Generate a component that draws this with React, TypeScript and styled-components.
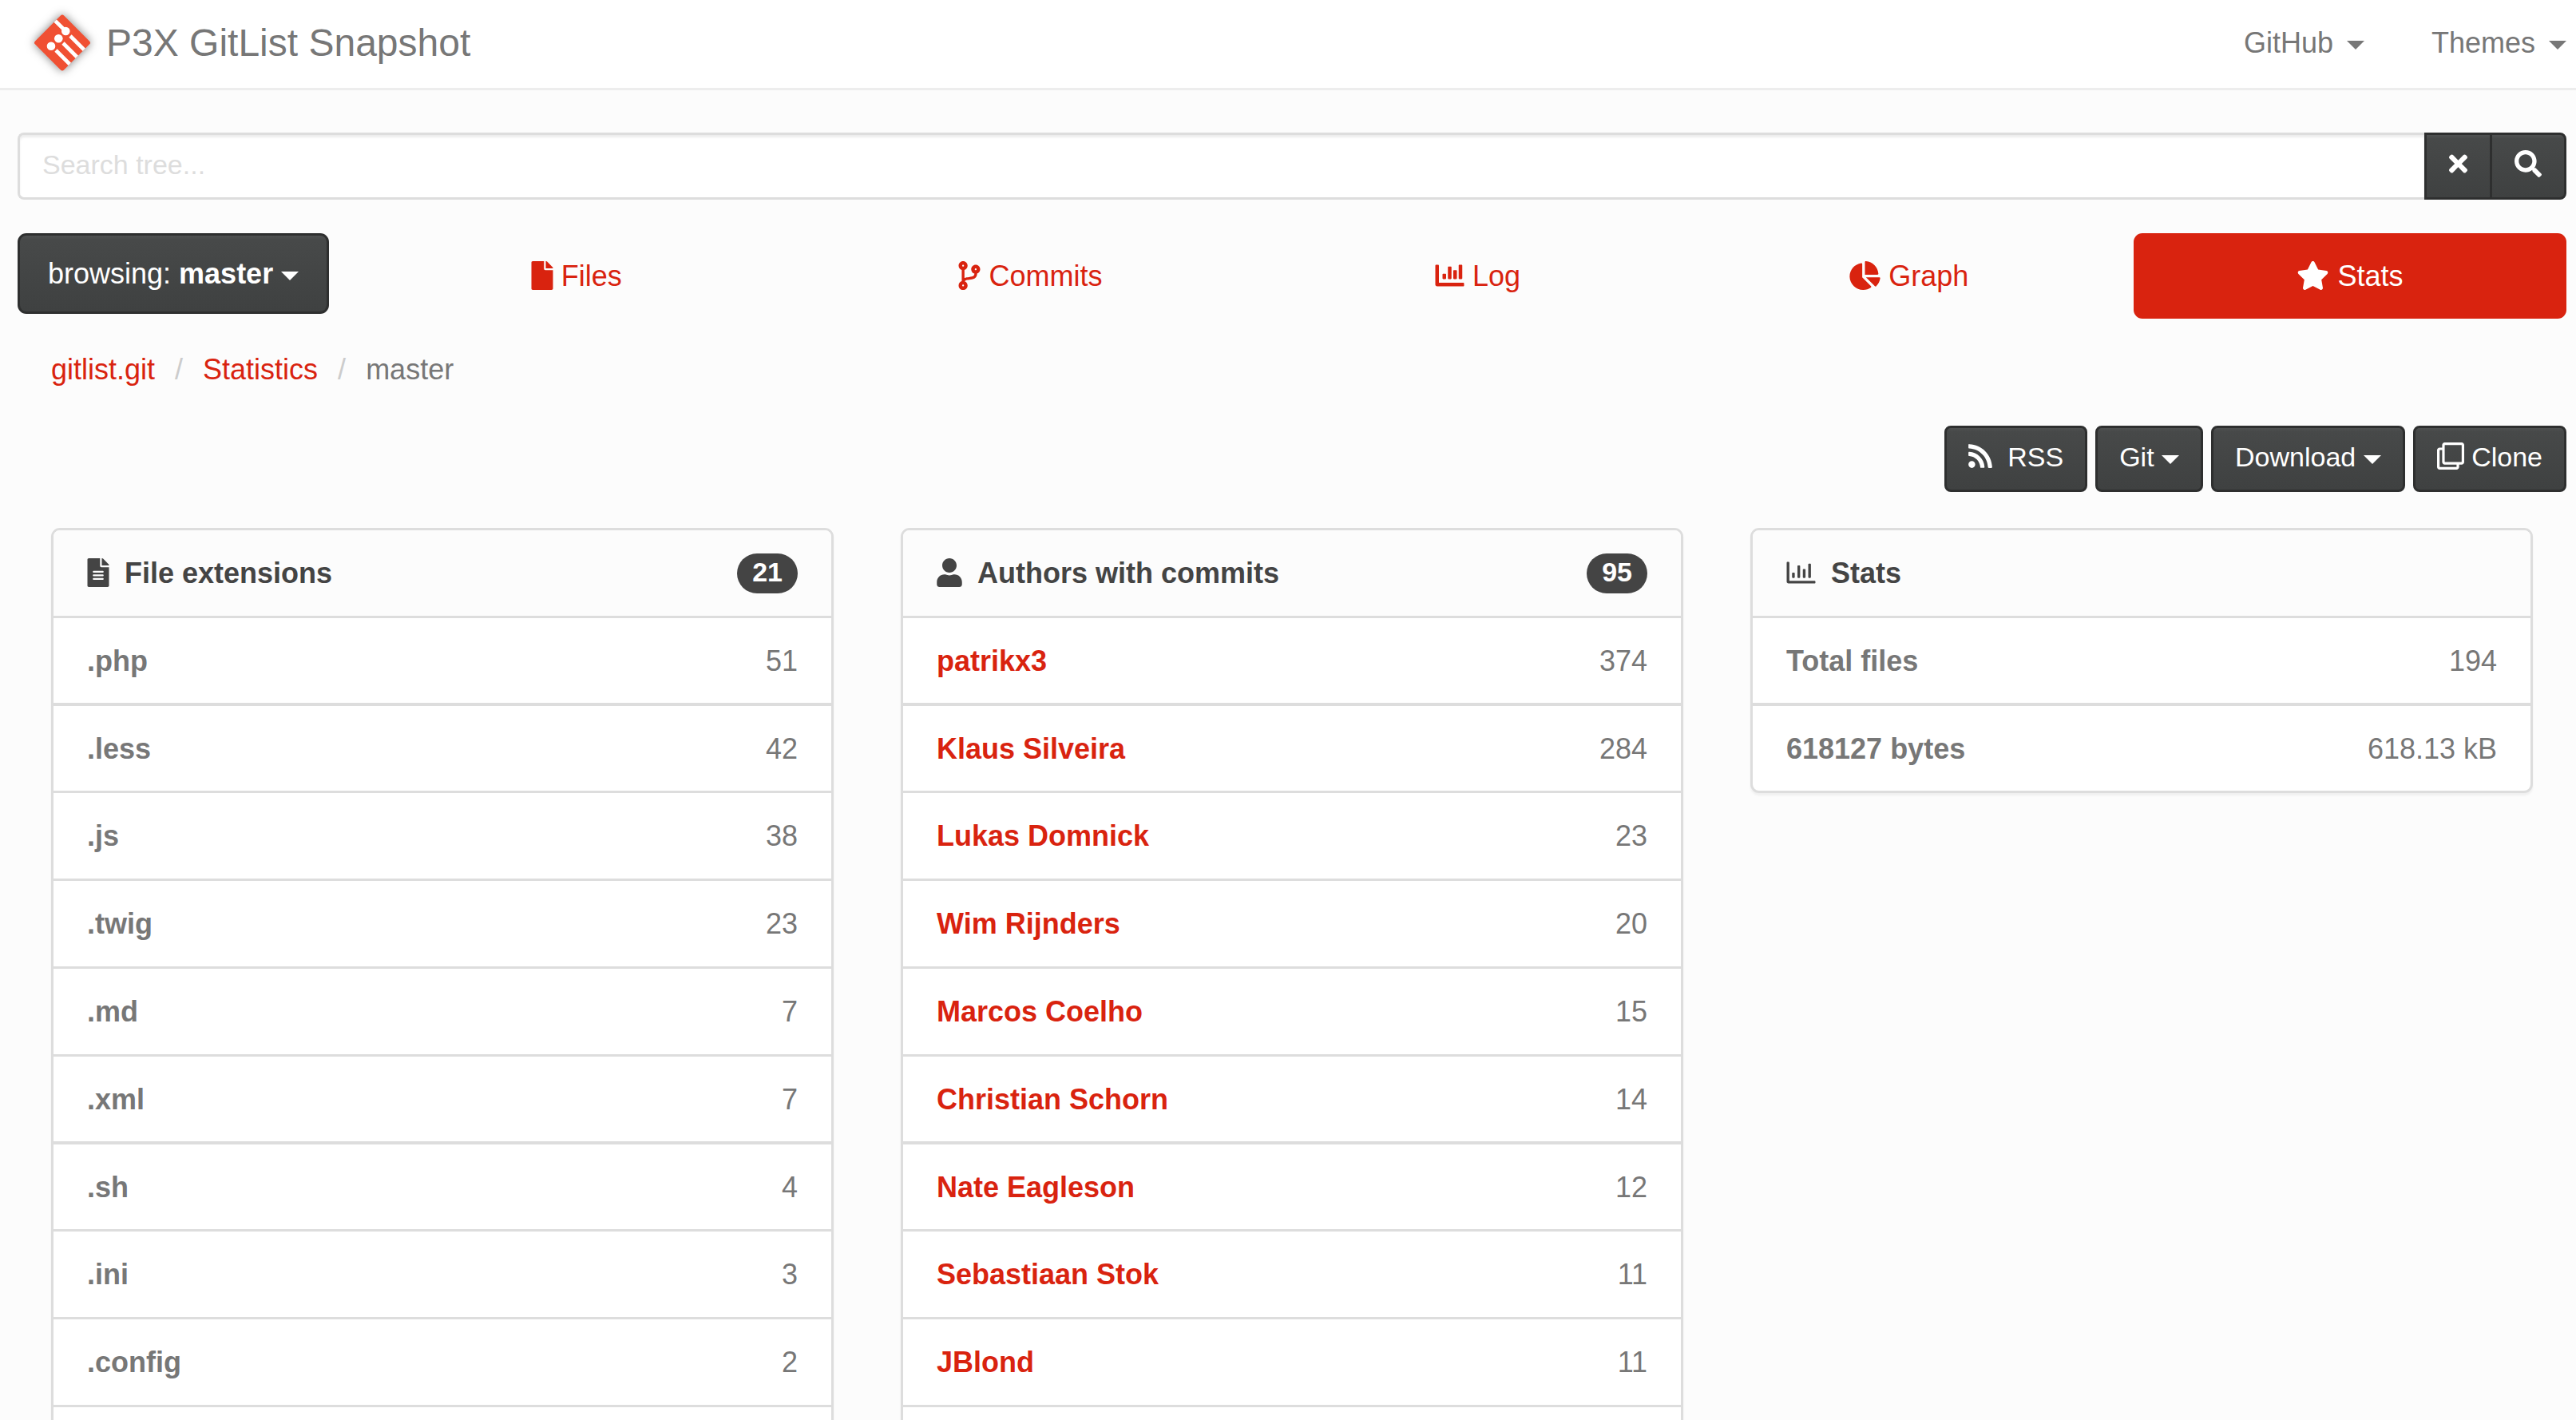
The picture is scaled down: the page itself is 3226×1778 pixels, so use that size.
import React from 'react';
import styled, { createGlobalStyle, css } from 'styled-components';
import {
  FaChartBar,
  FaChartPie,
  FaCodeBranch,
  FaFile,
  FaFileAlt,
  FaRegChartBar,
  FaRegClone,
  FaRss,
  FaSearch,
  FaStar,
  FaTimes,
  FaUser,
} from 'react-icons/fa';

const color = {
  page: '#fcfcfc',
  white: '#ffffff',
  line: '#dddddd',
  navLine: '#ededed',
  text: '#777777',
  heading: '#444444',
  red: '#d9230f',
  placeholder: '#dddddd',
  slash: '#cccccc',
  buttonEdge: '#2e2f2f',
};

const GlobalStyle = createGlobalStyle`
  *, *::before, *::after { box-sizing: border-box; }
  body {
    margin: 0;
    background: ${color.page};
    color: ${color.text};
    font-family: "Liberation Sans", Arial, sans-serif;
    font-size: 36px;
    line-height: 53px;
  }
  a { color: ${color.red}; text-decoration: none; }
  button, input { font-family: inherit; }
`;

const Page = styled.div`
  height: 100vh;
  overflow: hidden;
`;

const Icon = styled.span<{ $width: number }>`
  svg {
    width: ${p => p.$width}px;
    height: 1em;
    vertical-align: -0.125em;
  }
`;

const Caret = styled.span<{ $spaced?: boolean }>`
  display: inline-block;
  vertical-align: middle;
  margin-left: ${p => (p.$spaced ? '7px' : '0')};
  border-top: 11px solid;
  border-left: 11px solid transparent;
  border-right: 11px solid transparent;
`;

/* Top bar */

const Navbar = styled.header`
  display: flex;
  align-items: center;
  justify-content: space-between;
  padding: 27px 12px 30px 43px;
  background: ${color.white};
  border-bottom: 3px solid ${color.navLine};
`;

const Brand = styled.a`
  display: flex;
  align-items: center;
  gap: 20px;
  height: 53px;
  color: ${color.text};
  font-size: 48px;
`;

const LogoSvg = styled.svg`
  width: 70px;
  height: 71px;
  overflow: visible;
  filter: drop-shadow(0 0 6px rgba(0, 0, 0, 0.5));
`;

const NavMenu = styled.nav`
  display: flex;
  gap: 84px;
`;

const NavButton = styled.button`
  padding: 0;
  border: 0;
  background: none;
  color: ${color.text};
  font-size: 36px;
  line-height: 53px;
`;

/* Body */

const Main = styled.main`
  display: flex;
  flex-direction: column;
  padding: 53px 12px 0 22px;
`;

const darkSurface = css`
  border: 3px solid ${color.buttonEdge};
  background: linear-gradient(#4f5151, #474949 6%, #3f4141);
  color: ${color.white};
`;

const SearchForm = styled.form`
  display: flex;
  height: 84px;
`;

const SearchInput = styled.input`
  flex: 1;
  min-width: 0;
  padding: 0 28px 4px;
  border: 3px solid ${color.line};
  border-right: 0;
  border-radius: 8px 0 0 8px;
  background: ${color.white};
  box-shadow: inset 0 3px 3px rgba(0, 0, 0, 0.075);
  color: ${color.text};
  font-size: 34px;
  outline: 0;

  &::placeholder {
    color: ${color.placeholder};
    opacity: 1;
  }
`;

const SearchButton = styled.button`
  ${darkSurface}
  padding: 10px 28px 15px;
  font-size: 34px;
  line-height: 52px;

  & + & {
    margin-left: -3px;
    border-radius: 0 8px 8px 0;
  }
`;

const Toolbar = styled.div`
  display: flex;
  align-items: flex-start;
  gap: 42px;
  margin-top: 42px;
`;

const BranchButton = styled.button`
  ${darkSurface}
  padding: 21px 35px;
  border-radius: 11px;
  font-size: 36px;
  line-height: 53px;
`;

const Tabs = styled.nav`
  flex: 1;
  display: grid;
  grid-template-columns: 535fr 594fr 518fr 554fr 542fr;
  gap: 4px;
`;

const Tab = styled.a<{ $active?: boolean }>`
  padding: 27px 0;
  border-radius: 11px;
  text-align: center;
  ${p => p.$active && css`
    background: ${color.red};
    color: ${color.white};
  `}
`;

const Breadcrumb = styled.ol`
  display: flex;
  margin: 37px 0 0;
  padding: 0 0 0 42px;
  list-style: none;

  li + li::before {
    content: '/';
    padding: 0 25px;
    color: ${color.slash};
  }
`;

const Actions = styled.div`
  display: flex;
  justify-content: flex-end;
  gap: 10px;
  margin-top: 44px;
`;

const ActionButton = styled.button`
  ${darkSurface}
  padding: 10px 27px 15px;
  border-radius: 8px;
  font-size: 34px;
  line-height: 52px;
`;

const Columns = styled.div`
  display: grid;
  grid-template-columns: repeat(3, minmax(0, 1fr));
  align-items: start;
  gap: 84px;
  margin-top: 45px;
  padding: 0 42px;
`;

const Panel = styled.section`
  border: 3px solid ${color.line};
  border-radius: 11px;
  background: ${color.white};
  box-shadow: 0 3px 3px rgba(0, 0, 0, 0.05);
  overflow: hidden;
`;

const PanelHeader = styled.header`
  display: flex;
  align-items: center;
  gap: 19px;
  padding: 27px 42px;
  background: ${color.page};
  color: ${color.heading};
`;

const PanelTitle = styled.h2`
  flex: 1;
  margin: 0;
  font-size: 36px;
  line-height: 53px;
  font-weight: bold;
`;

const Badge = styled.span`
  padding: 6px 19px 10px;
  border-radius: 27px;
  background: ${color.heading};
  color: ${color.white};
  font-size: 34px;
  line-height: 34px;
  font-weight: bold;
`;

const Rows = styled.ul`
  margin: 0;
  padding: 0;
  list-style: none;
`;

const Row = styled.li`
  display: flex;
  justify-content: space-between;
  min-height: 110px;
  padding: 27px 42px;
  border-top: 3px solid ${color.line};

  &:nth-child(5n + 1) {
    min-height: 109px;
    padding-bottom: 26px;
  }

  &:nth-child(5n + 2) {
    padding-bottom: 26px;
    border-top-width: 4px;
  }
`;

const RowName = styled.strong`
  font-weight: bold;
`;

interface Entry {
  name: string;
  value: string;
}

const extensions: Entry[] = [
  { name: '.php', value: '51' },
  { name: '.less', value: '42' },
  { name: '.js', value: '38' },
  { name: '.twig', value: '23' },
  { name: '.md', value: '7' },
  { name: '.xml', value: '7' },
  { name: '.sh', value: '4' },
  { name: '.ini', value: '3' },
  { name: '.config', value: '2' },
];

const authors: Entry[] = [
  { name: 'patrikx3', value: '374' },
  { name: 'Klaus Silveira', value: '284' },
  { name: 'Lukas Domnick', value: '23' },
  { name: 'Wim Rijnders', value: '20' },
  { name: 'Marcos Coelho', value: '15' },
  { name: 'Christian Schorn', value: '14' },
  { name: 'Nate Eagleson', value: '12' },
  { name: 'Sebastiaan Stok', value: '11' },
  { name: 'JBlond', value: '11' },
];

const totals: Entry[] = [
  { name: 'Total files', value: '194' },
  { name: '618127 bytes', value: '618.13 kB' },
];

const tabs = [
  { label: 'Files', icon: <FaFile />, width: 28 },
  { label: 'Commits', icon: <FaCodeBranch />, width: 28 },
  { label: 'Log', icon: <FaChartBar />, width: 37 },
  { label: 'Graph', icon: <FaChartPie />, width: 39 },
  { label: 'Stats', icon: <FaStar />, width: 41, active: true },
];

function Logo() {
  return (
    <LogoSvg viewBox="13 12 70 71" aria-hidden="true">
      <defs>
        <clipPath id="diamond">
          <rect x="22.5" y="22" width="51" height="51" rx="3" transform="rotate(45 48 47.5)" />
        </clipPath>
      </defs>
      <g clipPath="url(#diamond)">
        <rect x="10" y="10" width="76" height="76" fill="#f05033" />
        <g stroke="#fff" strokeWidth="4.6">
          <path d="M36 17 52.3 33M58 39 78 59M49 48 69 68M40 57 60 77" />
        </g>
        <g fill="#fff">
          <circle cx="52.3" cy="33" r="5.3" />
          <circle cx="43.3" cy="42.3" r="5.3" />
          <circle cx="34" cy="51.7" r="5.3" />
        </g>
      </g>
    </LogoSvg>
  );
}

interface StatPanelProps {
  title: string;
  icon: React.ReactNode;
  iconWidth: number;
  entries: Entry[];
  count?: number;
  linked?: boolean;
  continues?: boolean;
}

function StatPanel({ title, icon, iconWidth, entries, count, linked, continues }: StatPanelProps) {
  return (
    <Panel>
      <PanelHeader>
        <Icon $width={iconWidth}>{icon}</Icon>
        <PanelTitle>{title}</PanelTitle>
        {count !== undefined && <Badge>{count}</Badge>}
      </PanelHeader>
      <Rows>
        {entries.map(entry => (
          <Row key={entry.name}>
            <RowName>{linked ? <a href="#author">{entry.name}</a> : entry.name}</RowName>
            <span>{entry.value}</span>
          </Row>
        ))}
        {continues && <Row aria-hidden="true" />}
      </Rows>
    </Panel>
  );
}

export default function App() {
  return (
    <Page>
      <GlobalStyle />
      <Navbar>
        <Brand href="#home">
          <Logo />
          P3X GitList Snapshot
        </Brand>
        <NavMenu>
          <NavButton type="button">GitHub <Caret $spaced /></NavButton>
          <NavButton type="button">Themes <Caret $spaced /></NavButton>
        </NavMenu>
      </Navbar>

      <Main>
        <SearchForm role="search" onSubmit={e => e.preventDefault()}>
          <SearchInput type="text" aria-label="Search tree" placeholder="Search tree..." />
          <SearchButton type="reset" aria-label="Clear"><Icon $width={23}><FaTimes /></Icon></SearchButton>
          <SearchButton type="submit" aria-label="Search"><Icon $width={34}><FaSearch /></Icon></SearchButton>
        </SearchForm>

        <Toolbar>
          <BranchButton type="button">browsing: <strong>master</strong> <Caret /></BranchButton>
          <Tabs>
            {tabs.map(tab => (
              <Tab key={tab.label} href={`#${tab.label.toLowerCase()}`} $active={tab.active}>
                <Icon $width={tab.width}>{tab.icon}</Icon> {tab.label}
              </Tab>
            ))}
          </Tabs>
        </Toolbar>

        <Breadcrumb>
          <li><a href="#repository">gitlist.git</a></li>
          <li><a href="#stats">Statistics</a></li>
          <li>master</li>
        </Breadcrumb>

        <Actions>
          <ActionButton type="button"><Icon $width={30}><FaRss /></Icon>&nbsp; RSS</ActionButton>
          <ActionButton type="button">Git <Caret /></ActionButton>
          <ActionButton type="button">Download <Caret /></ActionButton>
          <ActionButton type="button"><Icon $width={34}><FaRegClone /></Icon> Clone</ActionButton>
        </Actions>

        <Columns>
          <StatPanel title="File extensions" icon={<FaFileAlt />} iconWidth={28} entries={extensions} count={21} continues />
          <StatPanel title="Authors with commits" icon={<FaUser />} iconWidth={32} entries={authors} count={95} linked continues />
          <StatPanel title="Stats" icon={<FaRegChartBar />} iconWidth={37} entries={totals} />
        </Columns>
      </Main>
    </Page>
  );
}
